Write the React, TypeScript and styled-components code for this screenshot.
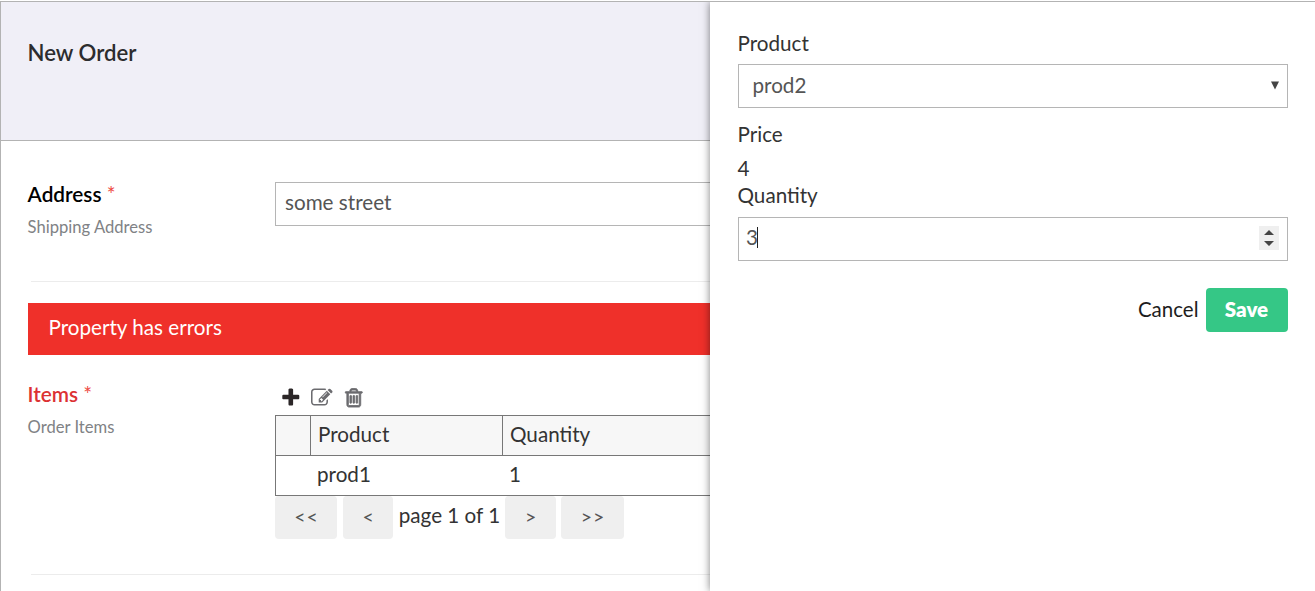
import React from "react";
import styled, { createGlobalStyle, css } from "styled-components";

const GlobalStyle = createGlobalStyle`
  *, *::before, *::after { box-sizing: border-box; }
  body {
    margin: 0;
    background: #fff;
    color: #333;
    font-family: Lato, "Open Sans", sans-serif;
    font-size: 20.65px;
    line-height: 28px;
  }
`;

const Page = styled.div`
  position: relative;
  height: 591px;
  overflow: hidden;
  padding-top: 1px;
`;

const Form = styled.main`
  height: 590px;
  border-top: 1px solid #b3b3b3;
  border-left: 1px solid #b3b3b3;
`;

const Header = styled.header`
  height: 139px;
  padding: 37px 26.6px;
  background: #f0eff7;
  border-bottom: 1px solid #b3b3b3;
`;

const Title = styled.h1`
  margin: 0;
  font-size: 22.15px;
  line-height: 28px;
  font-weight: 600;
  color: #2c2c2e;
`;

const Body = styled.div`
  padding: 0 27px;
`;

const Property = styled.section<{ $top: number; $height: number }>`
  display: flex;
  height: ${(p) => p.$height}px;
  padding-top: ${(p) => p.$top}px;
`;

const Caption = styled.div<{ $shift: number }>`
  width: 247px;
  flex: none;
  margin-top: ${(p) => p.$shift}px;
`;

const Name = styled.div<{ $error?: boolean }>`
  margin-left: -0.4px;
  font-size: 20.75px;
  line-height: 26px;
  font-weight: 600;
  color: ${(p) => (p.$error ? "#dc3133" : "#000")};
`;

const Required = styled.span`
  font-weight: 400;
  color: #ee4b44;
`;

const Hint = styled.div`
  margin: 8px 0 0 -0.4px;
  font-size: 16.6px;
  line-height: 24px;
  color: #808285;
`;

const Content = styled.div`
  flex: 1;
  min-width: 0;
`;

const fieldBox = css`
  display: flex;
  align-items: center;
  height: 44px;
  border: 1px solid #b5b5b5;
  background: #fff;
  color: #555;
`;

const TextField = styled.div`
  ${fieldBox}
  padding: 0 9px 4px;
`;

const Divider = styled.hr`
  height: 1px;
  margin: 0 0 0 3px;
  border: 0;
  background: #ececec;
`;

const ErrorBanner = styled.div`
  height: 52px;
  margin-top: 21px;
  padding: 10px 20.5px;
  background: #ef302a;
  color: #fff;
`;

const Tools = styled.div`
  display: flex;
  gap: 10.4px;
  height: 34px;
  padding: 6px 0 0 4.5px;
`;

const ToolIcon = styled.svg<{ $color: string; $stroke: number }>`
  width: 21.6px;
  height: 21.6px;
  fill: ${(p) => p.$color};
  stroke: ${(p) => p.$color};
  stroke-width: ${(p) => p.$stroke};
`;

const Grid = styled.div`
  border: 1px solid #777;
`;

const GridRow = styled.div<{ $head?: boolean }>`
  display: grid;
  grid-template-columns: 35px 192px 1fr;
  height: ${(p) => (p.$head ? 40 : 39)}px;
  background: ${(p) => (p.$head ? "#f7f7f7" : "#fff")};
  border-bottom: ${(p) => (p.$head ? "1px solid #777" : "0")};
`;

const Cell = styled.div<{ $head?: boolean }>`
  padding: 4px 7px;
  border-right: ${(p) => (p.$head ? "1px solid #777" : "0")};
  padding-left: ${(p) => (p.$head ? 7 : 6)}px;
`;

const Pager = styled.div`
  display: flex;
  align-items: flex-start;
`;

const PageButton = styled.button<{ $width: number }>`
  width: ${(p) => p.$width}px;
  height: 43px;
  padding: 0 0 2px 1px;
  border: 0;
  border-radius: 4px;
  background: #efefef;
  color: #555;
  font: 400 19.5px/41px Lato, sans-serif;
  letter-spacing: 0.9px;
`;

const PageInfo = styled.span`
  width: 112px;
  padding: 5px 0 0 1px;
  text-align: center;
  white-space: nowrap;
`;

const Gap = styled.span<{ $width: number }>`
  width: ${(p) => p.$width}px;
`;

const Drawer = styled.aside`
  position: absolute;
  top: 2px;
  right: 0;
  bottom: 0;
  width: 605px;
  padding: 27px 27px 0 27.5px;
  background: #fff;
  box-shadow: 0 0 8px rgba(0, 0, 0, 0.5);
  clip-path: inset(0 0 0 -20px);
`;

const Label = styled.div<{ $gap: number }>`
  margin-bottom: ${(p) => p.$gap}px;
`;

const Select = styled.div`
  ${fieldBox}
  justify-content: space-between;
  margin: 0 0 12px 0.5px;
  padding: 0 7px 2px 13.5px;
`;

const NumberField = styled.div`
  ${fieldBox}
  justify-content: space-between;
  margin-left: 0.5px;
  padding: 0 8px 0 7px;
`;

const Typed = styled.span`
  width: 12px;
  height: 21px;
  margin-top: -3px;
  line-height: 21px;
  border-right: 1px solid #222;
`;

const Spinner = styled.svg`
  width: 20px;
  height: 24px;
  margin-top: -2px;
`;

const Actions = styled.div`
  display: flex;
  justify-content: flex-end;
  align-items: center;
  gap: 7.5px;
  margin-top: 27px;
`;

const Cancel = styled.span`
  margin-top: -2px;
  font-size: 20.5px;
  color: #1d1d1d;
`;

const Save = styled.button`
  width: 82px;
  height: 44px;
  padding: 0 1px 1px 0;
  border: 0;
  border-radius: 4px;
  background: #35c786;
  color: #fff;
  font: 800 20.5px/41px Lato, sans-serif;
`;

const PLUS =
  "M1600 736v192q0 40-28 68t-68 28h-416v416q0 40-28 68t-68 28h-192q-40 0-68-28t-28-68v-416h-416q-40 0-68-28t-28-68v-192q0-40 28-68t68-28h416v-416q0-40 28-68t68-28h192q40 0 68 28t28 68v416h416q40 0 68 28t28 68z";
const EDIT =
  "M888 1184l116-116-152-152-116 116v56h96v96h56zm440-720q-16-16-33 1l-350 350q-17 17-1 33t33-1l350-350q17-17 1-33zm80 594v190q0 119-84.5 203.5t-203.5 84.5h-832q-119 0-203.5-84.5t-84.5-203.5v-832q0-119 84.5-203.5t203.5-84.5h832q63 0 117 25 15 7 18 23 3 17-9 29l-49 49q-14 14-32 8-23-6-45-6h-832q-66 0-113 47t-47 113v832q0 66 47 113t113 47h832q66 0 113-47t47-113v-126q0-13 9-22l64-64q15-15 35-7t20 29zm-96-738l288 288-672 672h-288v-288zm444 132l-92 92-288-288 92-92q28-28 68-28t68 28l152 152q28 28 28 68t-28 68z";
const TRASH =
  "M704 736v576q0 14-9 23t-23 9h-64q-14 0-23-9t-9-23v-576q0-14 9-23t23-9h64q14 0 23 9t9 23zm256 0v576q0 14-9 23t-23 9h-64q-14 0-23-9t-9-23v-576q0-14 9-23t23-9h64q14 0 23 9t9 23zm256 0v576q0 14-9 23t-23 9h-64q-14 0-23-9t-9-23v-576q0-14 9-23t23-9h64q14 0 23 9t9 23zm128 724v-948h-896v948q0 22 7 40.5t14.5 27 10.5 8.5h832q3 0 10.5-8.5t14.5-27 7-40.5zm-672-1076h448l-48-117q-7-9-17-11h-317q-10 2-17 11zm928 32v64q0 14-9 23t-23 9h-96v948q0 83-47 143.5t-113 60.5h-832q-66 0-113-58.5t-47-141.5v-952h-96q-14 0-23-9t-9-23v-64q0-14 9-23t23-9h309l70-167q15-37 54-63t79-26h320q40 0 79 26t54 63l70 167h309q14 0 23 9t9 23z";

const tools = [
  { name: "add", path: PLUS, color: "#2b2627", stroke: 0 },
  { name: "edit", path: EDIT, color: "#6b6b6f", stroke: 0 },
  { name: "delete", path: TRASH, color: "#6b6b6f", stroke: 70 },
];

export default function App() {
  return (
    <Page>
      <GlobalStyle />
      <Form>
        <Header>
          <Title>New Order</Title>
        </Header>
        <Body>
          <Property $top={41} $height={140}>
            <Caption $shift={-1}>
              <Name>
                Address <Required>*</Required>
              </Name>
              <Hint>Shipping Address</Hint>
            </Caption>
            <Content>
              <TextField>some street</TextField>
            </Content>
          </Property>
          <Divider />
          <ErrorBanner>Property has errors</ErrorBanner>
          <Property $top={26} $height={219}>
            <Caption $shift={0}>
              <Name $error>
                Items <Required>*</Required>
              </Name>
              <Hint>Order Items</Hint>
            </Caption>
            <Content>
              <Tools>
                {tools.map((t) => (
                  <ToolIcon
                    key={t.name}
                    $color={t.color}
                    $stroke={t.stroke}
                    viewBox="0 0 1792 1792"
                  >
                    <path d={t.path} />
                  </ToolIcon>
                ))}
              </Tools>
              <Grid>
                <GridRow $head>
                  <Cell $head />
                  <Cell $head>Product</Cell>
                  <Cell $head>Quantity</Cell>
                </GridRow>
                <GridRow>
                  <Cell />
                  <Cell>prod1</Cell>
                  <Cell>1</Cell>
                </GridRow>
              </Grid>
              <Pager>
                <PageButton $width={62}>&lt;&lt;</PageButton>
                <Gap $width={6} />
                <PageButton $width={50}>&lt;</PageButton>
                <PageInfo>page 1 of 1</PageInfo>
                <PageButton $width={51}>&gt;</PageButton>
                <Gap $width={5} />
                <PageButton $width={63}>&gt;&gt;</PageButton>
              </Pager>
            </Content>
          </Property>
          <Divider />
        </Body>
      </Form>
      <Drawer>
        <Label $gap={7}>Product</Label>
        <Select>
          <span>prod2</span>
          <svg width="10" height="9" viewBox="0 0 10 9">
            <path d="M1 .5h8L5 8.5z" fill="#444" />
          </svg>
        </Select>
        <Label $gap={6}>Price</Label>
        <Label $gap={-1}>4</Label>
        <Label $gap={8}>Quantity</Label>
        <NumberField>
          <Typed>3</Typed>
          <Spinner viewBox="0 0 20 24">
            <path d="M0 0h20v24H0z" fill="#efefef" />
            <path d="M5 9l5-5 5 5zM5 15h10l-5 5z" fill="#444" />
          </Spinner>
        </NumberField>
        <Actions>
          <Cancel>Cancel</Cancel>
          <Save>Save</Save>
        </Actions>
      </Drawer>
    </Page>
  );
}
